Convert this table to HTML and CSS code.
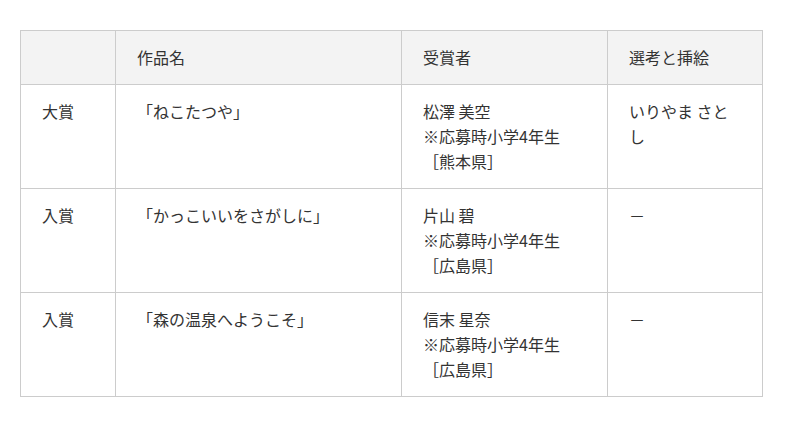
FILE: index.html
```html
<!DOCTYPE html>
<html lang="ja">
<head>
<meta charset="utf-8">
<link rel="stylesheet" href="styles.css">
</head>
<body>
<table class="awards">
  <colgroup>
    <col class="c1"><col class="c2"><col class="c3"><col class="c4">
  </colgroup>
  <thead>
    <tr><th></th><th>作品名</th><th>受賞者</th><th>選考と挿絵</th></tr>
  </thead>
  <tbody>
    <tr>
      <td>大賞</td>
      <td>「ねこたつや」</td>
      <td>松澤 美空<br>※応募時小学4年生<br>［熊本県］</td>
      <td>いりやま さとし</td>
    </tr>
    <tr>
      <td>入賞</td>
      <td>「かっこいいをさがしに」</td>
      <td>片山 碧<br>※応募時小学4年生<br>［広島県］</td>
      <td>－</td>
    </tr>
    <tr>
      <td>入賞</td>
      <td>「森の温泉へようこそ」</td>
      <td>信末 星奈<br>※応募時小学4年生<br>［広島県］</td>
      <td>－</td>
    </tr>
  </tbody>
</table>
</body>
</html>
```
FILE: styles.css
```css
html, body {
  margin: 0;
  padding: 0;
  background: #fff;
}
body {
  padding: 30px 20px;
  font-family: "Noto Sans CJK JP", "Noto Sans", sans-serif;
  font-size: 16px;
  color: #333;
}
.awards {
  border-collapse: collapse;
  width: 742px;
  table-layout: fixed;
}
.c1 { width: 95px; }
.c2 { width: 286px; }
.c3 { width: 206px; }
.c4 { width: 155px; }
.awards th,
.awards td {
  border: 1px solid #ccc;
  padding: 14px 21px;
  line-height: 25px;
  text-align: left;
  vertical-align: top;
  font-weight: normal;
}
.awards thead th {
  background: #f3f3f3;
}
```
